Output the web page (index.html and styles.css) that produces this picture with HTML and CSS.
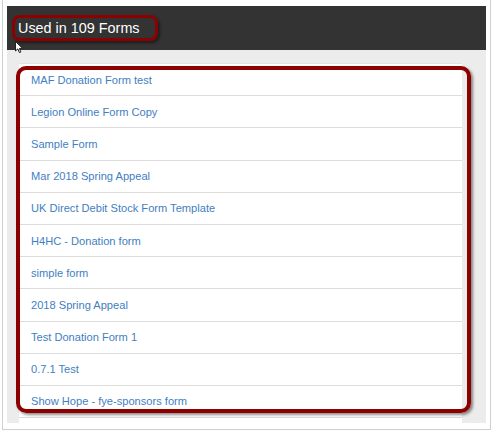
FILE: index.html
```html
<!DOCTYPE html>
<html>
<head>
    <title>Used in 109 Forms</title>
    <link rel="stylesheet" href="styles.css">
</head>
<body>
    <div class="frame">
        <div class="modal-header">
            <h2 class="modal-title">Used in 109 Forms</h2>
        </div>
        <div class="modal-body">
            <ul class="form-list">
                <li><a href="#">MAF Donation Form test</a></li>
                <li><a href="#">Legion Online Form Copy</a></li>
                <li><a href="#">Sample Form</a></li>
                <li><a href="#">Mar 2018 Spring Appeal</a></li>
                <li><a href="#">UK Direct Debit Stock Form Template</a></li>
                <li><a href="#">H4HC - Donation form</a></li>
                <li><a href="#">simple form</a></li>
                <li><a href="#">2018 Spring Appeal</a></li>
                <li><a href="#">Test Donation Form 1</a></li>
                <li><a href="#">0.7.1 Test</a></li>
                <li><a href="#">Show Hope - fye-sponsors form</a></li>
            </ul>
        </div>

        <!-- annotation marks drawn over the screenshot -->
        <div class="highlight highlight-title"></div>
        <div class="highlight highlight-list"></div>
        <svg class="cursor" width="9" height="13" viewBox="0 0 9 13">
            <path d="M0.5 0.5 L0.5 10 L2.8 7.9 L4.4 11.6 L5.9 11 L4.4 7.4 L7.6 7.4 Z" fill="#fff" stroke="#222" stroke-width="1"/>
        </svg>
    </div>
</body>
</html>
```

FILE: styles.css
```css
body {
    margin: 0;
    background-color: #fff;
    font-family: "Liberation Sans", Arial, sans-serif;
}

.frame {
    position: relative;
    width: 479px;
    margin-left: 2px;
    padding: 6px 4px;
    border: 1px solid #cfcfcf;
    border-top: none;
    background-color: #fff;
}

.modal-header {
    height: 44px;
    display: flex;
    align-items: center;
    padding-left: 11px;
    background-color: #333;
}

.modal-title {
    margin: 0;
    color: #fff;
    font-size: 14.4px;
    font-weight: normal;
}

.modal-body {
    height: 360px;
    overflow: hidden;
    padding: 13px 24px 0 12px;
    background-color: #ececec;
}

.form-list {
    list-style: none;
    margin: 0;
    padding: 0;
    min-height: 380px;
    background-color: #fff;
    border-top: 1px solid #e2e2e2;
}

.form-list li {
    height: 31.2px;
    display: flex;
    align-items: center;
    padding-left: 12px;
    border-bottom: 1px solid #dcdcdc;
}

.form-list a {
    color: #3f80c2;
    font-size: 11.1px;
    text-decoration: none;
}

.highlight {
    position: absolute;
    box-sizing: border-box;
    border: 3px solid #8c0000;
    box-shadow: 2px 2px 3px rgba(0, 0, 0, 0.45);
}

.highlight-title {
    left: 9px;
    top: 15px;
    width: 146px;
    height: 26px;
    border-radius: 8px;
}

.highlight-list {
    left: 13px;
    top: 66px;
    width: 455px;
    height: 347px;
    border-width: 4px;
    border-radius: 10px;
}

.cursor {
    position: absolute;
    left: 12px;
    top: 41px;
}
```
